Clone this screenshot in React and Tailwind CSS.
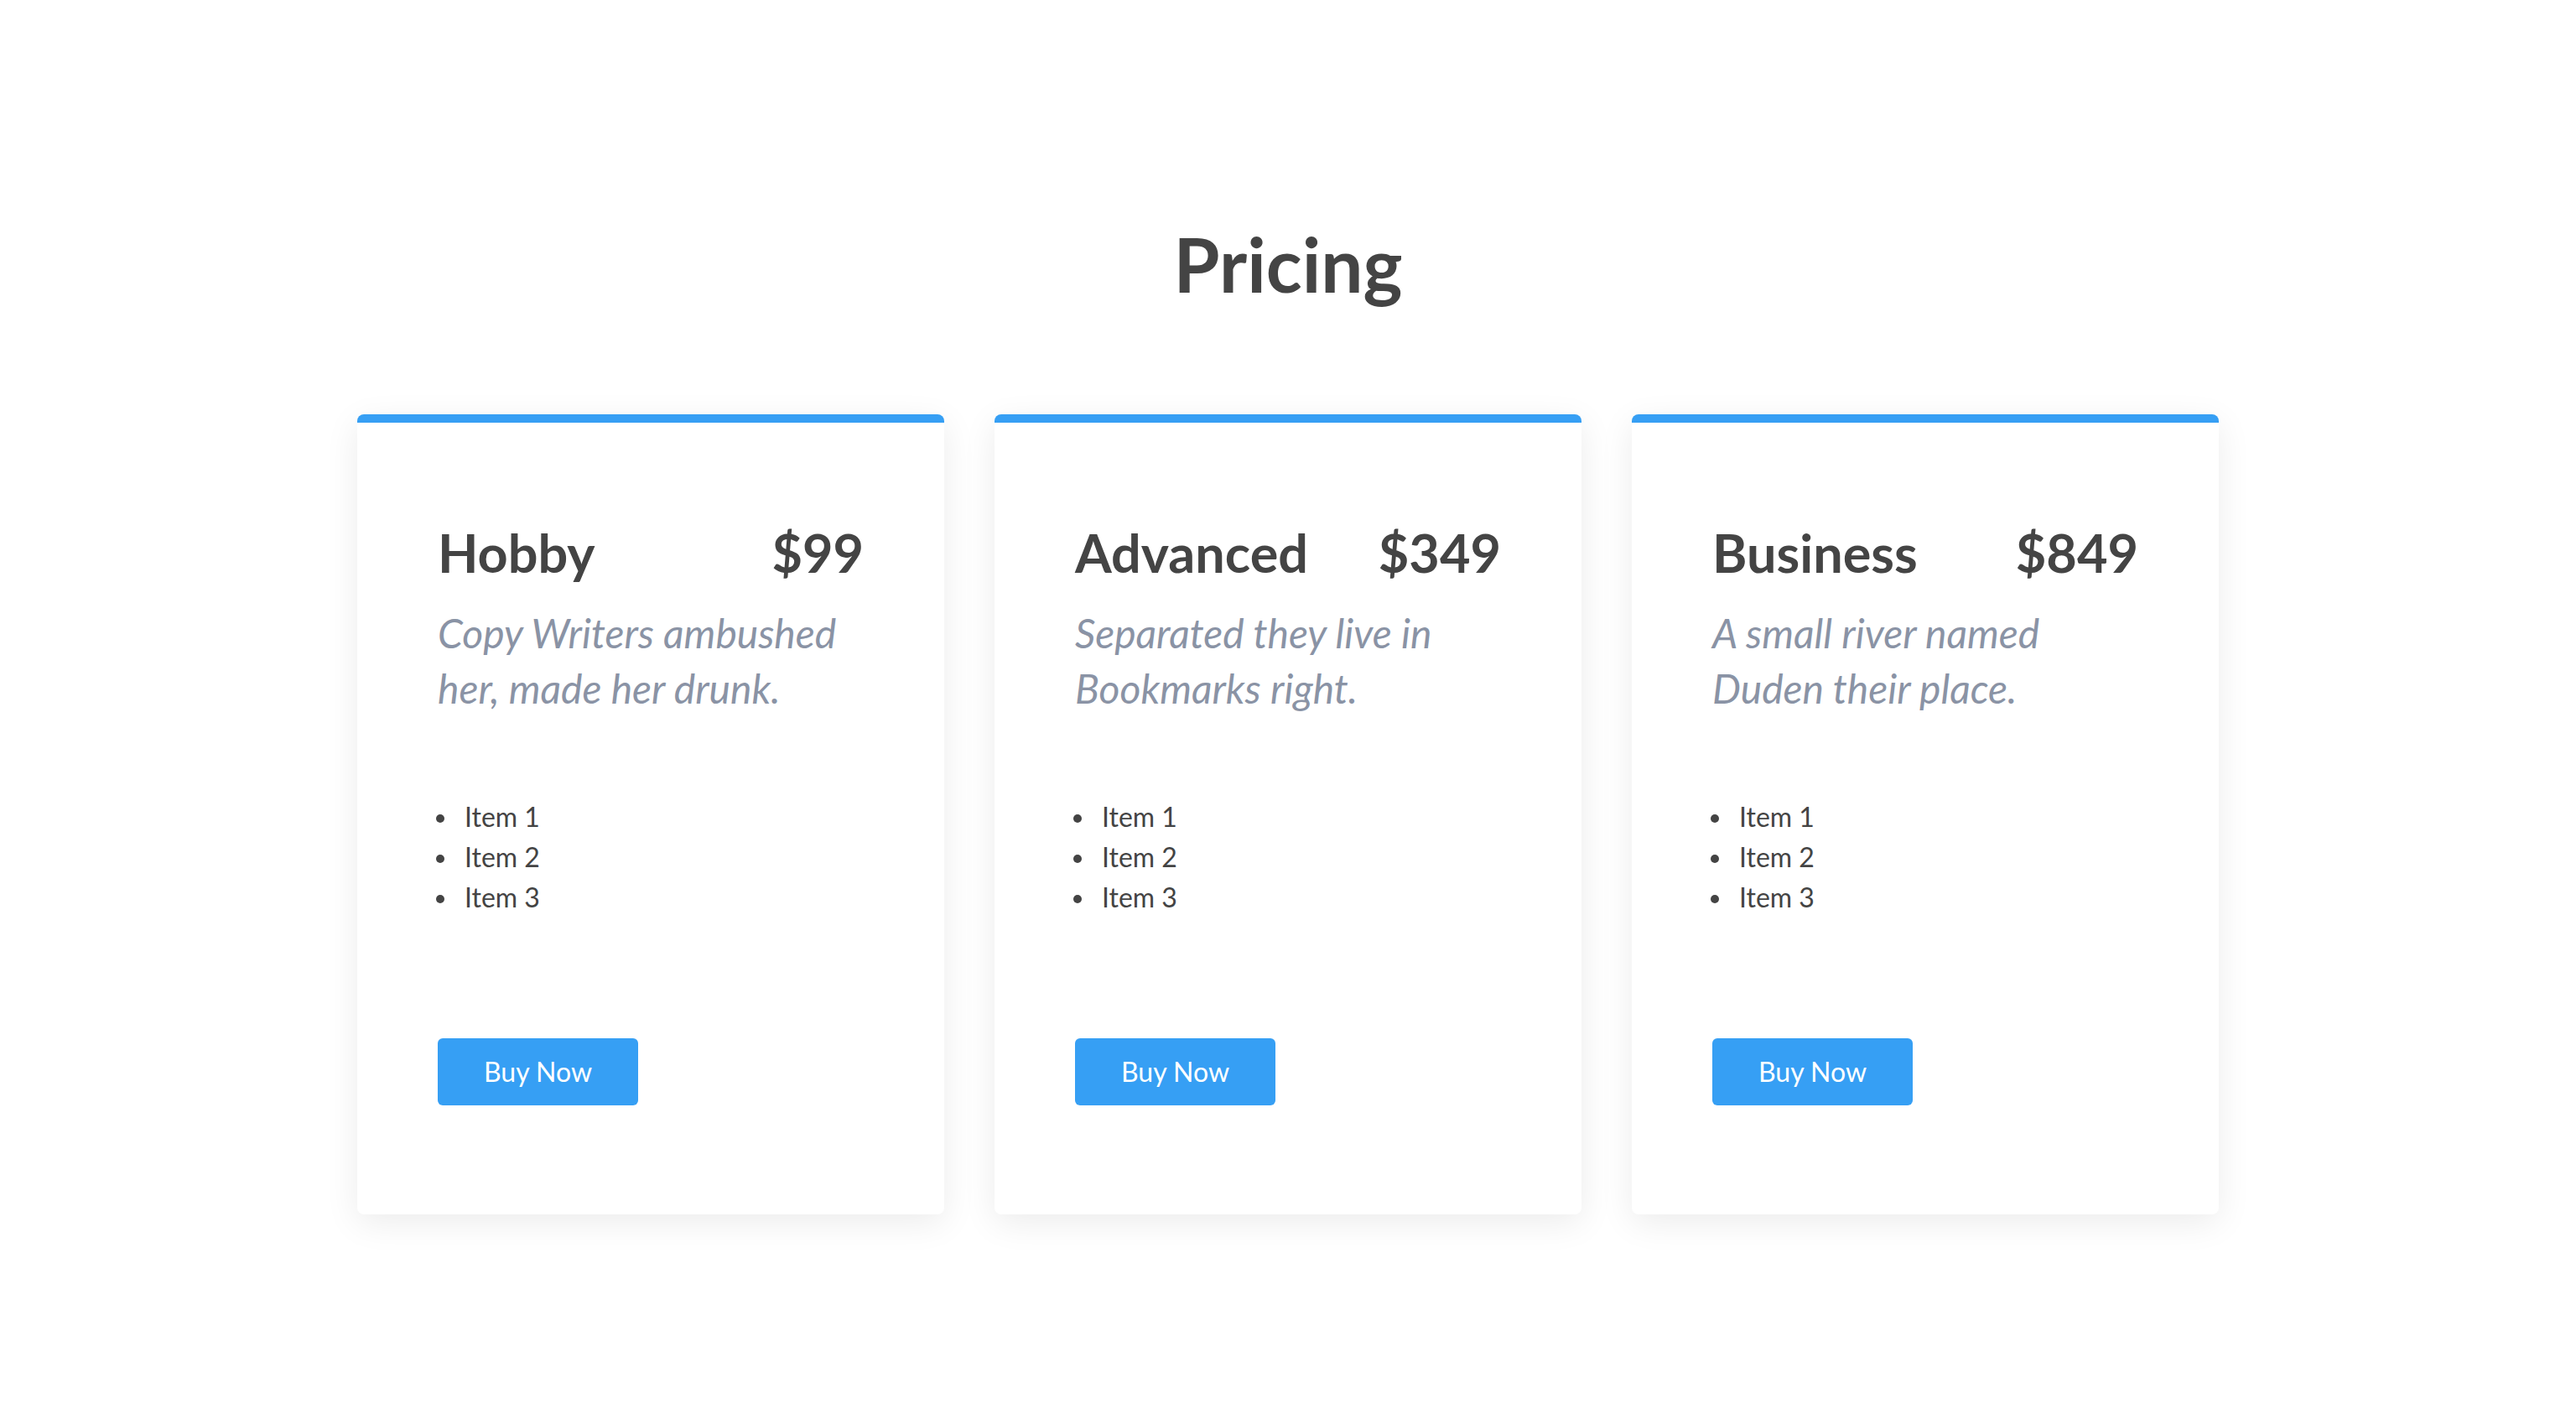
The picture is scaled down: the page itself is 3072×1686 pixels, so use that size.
import React from "react";

const plans = [
  { name: "Hobby", price: "$99", desc: "Copy Writers ambushed her, made her drunk." },
  { name: "Advanced", price: "$349", desc: "Separated they live in Bookmarks right." },
  { name: "Business", price: "$849", desc: "A small river named Duden their place." },
];

function Card({ plan }) {
  return (
    <div className="bg-white rounded-[8px] shadow-[0_10px_40px_rgba(0,0,0,0.08)] overflow-hidden flex flex-col">
      <div className="h-[10px] bg-[#369ff4]" />
      <div className="px-[96px] pt-[117px] pb-[130px] flex flex-col">
        <div className="flex justify-between items-baseline text-[63px] leading-[1.2] font-bold text-[#444444]">
          <span>{plan.name}</span>
          <span>{plan.price}</span>
        </div>
        <p className="mt-[26px] text-[48px] leading-[66px] italic text-[#8a93a5]">{plan.desc}</p>
        <ul className="mt-[96px] text-[32px] leading-[48px] text-[#444444]">
          {["Item 1", "Item 2", "Item 3"].map((it) => (
            <li key={it} className="flex items-center">
              <span className="ml-[-2px] w-[10px] h-[10px] rounded-full bg-[#444444] mt-[4px]" />
              <span className="ml-[24px]">{it}</span>
            </li>
          ))}
        </ul>
        <div className="mt-[144px]">
          <button className="h-[80px] w-[239px] rounded-[6px] bg-[#369ff4] text-white text-[32px] leading-[48px]">
            Buy Now
          </button>
        </div>
      </div>
    </div>
  );
}

export default function App() {
  return (
    <div
      className="min-h-[1686px] bg-white pt-[262px]"
      style={{ fontFamily: "Lato, 'Liberation Sans', sans-serif" }}
    >
      <h1 className="text-center text-[89px] leading-[1.2] font-bold text-[#444444]">Pricing</h1>
      <div className="mt-[125px] mx-auto w-[2220px] grid grid-cols-3 gap-[60px]">
        {plans.map((p) => (
          <Card key={p.name} plan={p} />
        ))}
      </div>
    </div>
  );
}
